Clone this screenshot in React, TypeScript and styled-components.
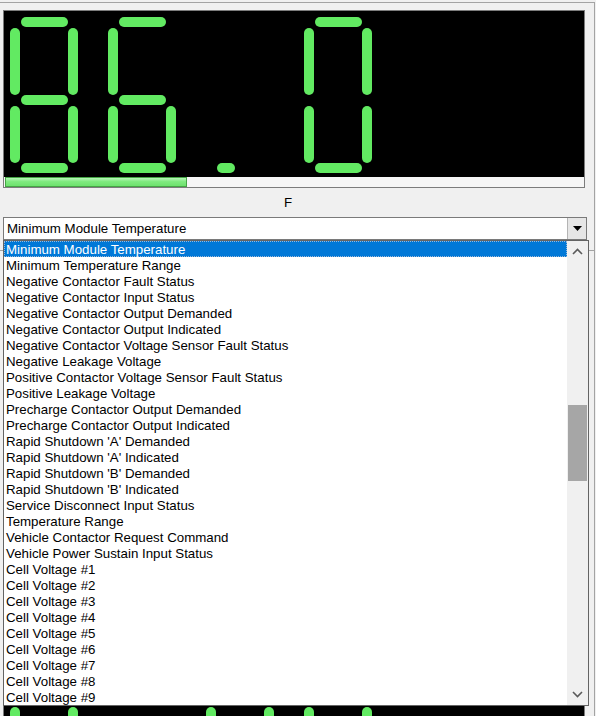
import React from "react";
import styled, { createGlobalStyle } from "styled-components";

const GlobalStyle = createGlobalStyle`
  html, body {
    margin: 0;
    padding: 0;
    background: #f0f0f0;
    overflow: hidden;
  }
  body {
    font-family: "Liberation Sans", Arial, sans-serif;
    font-size: 13.3px;
    color: #000;
  }
`;

const Screen = styled.div`
  position: relative;
  width: 596px;
  height: 716px;
  overflow: hidden;
  padding-top: 2px;
  box-sizing: border-box;
`;

const GaugePanel = styled.div<{ $height: number }>`
  width: 595px;
  height: ${(p) => p.$height}px;
  box-sizing: border-box;
  border-top: 1px solid #a3a3a3;
  border-right: 1px solid #a3a3a3;
  padding: 7px 0 0 3px;
  display: flex;
  flex-direction: column;
`;

const DisplayFrame = styled.div`
  width: 580px;
  border: 1px solid #7c7c7c;
  display: flex;
  flex-direction: column;
`;

const Track = styled.div`
  height: 10px;
  background: #f6f6f6;
  padding: 0 0 0 1px;
  box-sizing: border-box;
`;

const Bar = styled.div`
  height: 10px;
  box-sizing: border-box;
  border: 1px solid #45a545;
  background: linear-gradient(#b8f6b8, #7fea7f 45%, #6ee26e);
`;

const UnitLabel = styled.div`
  width: 570px;
  height: 29px;
  line-height: 29px;
  text-align: center;
`;

const Combo = styled.div`
  width: 584px;
  height: 23px;
  box-sizing: border-box;
  border: 1px solid #7a7a7a;
  background: #fff;
  display: flex;
  align-items: center;
  padding-left: 3px;
`;

const ComboText = styled.span`
  flex: 1;
  line-height: 21px;
`;

const ComboButton = styled.div`
  width: 19px;
  height: 21px;
  box-sizing: border-box;
  border-left: 1px solid #b4b4b4;
  background: #e6e6e6;
  display: flex;
  align-items: center;
  justify-content: center;
`;

const LowerPanel = styled.div`
  width: 595px;
  box-sizing: border-box;
  border-top: 1px solid #a3a3a3;
  border-right: 1px solid #a3a3a3;
  padding: 438px 0 0 3px;
`;

const DropList = styled.div`
  position: absolute;
  top: 240px;
  left: 3px;
  width: 586px;
  height: 466px;
  box-sizing: border-box;
  border: 1px solid #646464;
  background: #fff;
  display: flex;
`;

const Items = styled.div`
  flex: 1;
  overflow: hidden;
`;

const Item = styled.div<{ $selected?: boolean }>`
  height: 16px;
  line-height: 17px;
  padding-left: 2px;
  white-space: nowrap;
  box-sizing: border-box;
  color: ${(p) => (p.$selected ? "#fff" : "#000")};
  background: ${(p) => (p.$selected ? "#0078d7" : "transparent")};
  outline: ${(p) => (p.$selected ? "1px dotted #9ab8d8" : "none")};
  outline-offset: -1px;
`;

const ScrollBar = styled.div`
  width: 21px;
  background: #f0f0f0;
  display: flex;
  flex-direction: column;
  align-items: center;
`;

const ScrollArrow = styled.div`
  height: 21px;
  width: 100%;
  display: flex;
  align-items: center;
  justify-content: center;
`;

const ScrollSpace = styled.div<{ $height: number }>`
  height: ${(p) => p.$height}px;
`;

const Thumb = styled.div`
  width: 19px;
  height: 76px;
  background: #a6a6a6;
`;

// segment boxes relative to a digit cell
const SEG = {
  a: { x: 11, y: 6, w: 47, h: 10 },
  b: { x: 58, y: 17, w: 10, h: 67 },
  c: { x: 58, y: 95, w: 10, h: 57 },
  d: { x: 11, y: 152, w: 47, h: 10 },
  e: { x: 0, y: 95, w: 10, h: 57 },
  f: { x: 0, y: 17, w: 10, h: 67 },
  g: { x: 11, y: 84, w: 47, h: 10 },
  p: { x: 11, y: 152, w: 18, h: 10 },
};

const GLYPHS: Record<string, string> = {
  "0": "abcdef",
  "1": "bc",
  "2": "abdeg",
  "3": "abcdg",
  "4": "bcfg",
  "5": "acdfg",
  "6": "acdefg",
  "7": "abc",
  "8": "abcdefg",
  "9": "abcdfg",
  ".": "p",
  " ": "",
};

const SevenSeg = ({ cells }: { cells: string[] }) => (
  <svg width="580" height="166" style={{ display: "block", background: "#000" }}>
    {cells.map((ch, i) =>
      GLYPHS[ch].split("").map((s) => {
        const r = SEG[s as keyof typeof SEG];
        return (
          <rect
            key={`${i}${s}`}
            x={6 + i * 98 + r.x}
            y={r.y}
            width={r.w}
            height={r.h}
            rx={5}
            fill="#62ea62"
          />
        );
      })
    )}
  </svg>
);

const Chevron = ({ up }: { up?: boolean }) => (
  <svg width="11" height="7" viewBox="0 0 11 7">
    <polyline
      points={up ? "1,6 5.5,1.5 10,6" : "1,1 5.5,5.5 10,1"}
      fill="none"
      stroke="#5a5a5a"
      strokeWidth="1.6"
    />
  </svg>
);

const items = [
  "Minimum Module Temperature",
  "Minimum Temperature Range",
  "Negative Contactor Fault Status",
  "Negative Contactor Input Status",
  "Negative Contactor Output Demanded",
  "Negative Contactor Output Indicated",
  "Negative Contactor Voltage Sensor Fault Status",
  "Negative Leakage Voltage",
  "Positive Contactor Voltage Sensor Fault Status",
  "Positive Leakage Voltage",
  "Precharge Contactor Output Demanded",
  "Precharge Contactor Output Indicated",
  "Rapid Shutdown 'A' Demanded",
  "Rapid Shutdown 'A' Indicated",
  "Rapid Shutdown 'B' Demanded",
  "Rapid Shutdown 'B' Indicated",
  "Service Disconnect Input Status",
  "Temperature Range",
  "Vehicle Contactor Request Command",
  "Vehicle Power Sustain Input Status",
  "Cell Voltage #1",
  "Cell Voltage #2",
  "Cell Voltage #3",
  "Cell Voltage #4",
  "Cell Voltage #5",
  "Cell Voltage #6",
  "Cell Voltage #7",
  "Cell Voltage #8",
  "Cell Voltage #9",
];

const App = () => (
  <Screen>
    <GlobalStyle />
    <GaugePanel $height={248}>
      <DisplayFrame>
        <SevenSeg cells={["8", "6", ".", "0"]} />
        <Track>
          <Bar style={{ width: 182 }} />
        </Track>
      </DisplayFrame>
      <UnitLabel>F</UnitLabel>
      <Combo>
        <ComboText>Minimum Module Temperature</ComboText>
        <ComboButton>
          <svg width="9" height="5" viewBox="0 0 9 5">
            <polygon points="0,0 9,0 4.5,5" fill="#000" />
          </svg>
        </ComboButton>
      </Combo>
    </GaugePanel>
    <LowerPanel>
      <DisplayFrame>
        <SevenSeg cells={["0", " ", "0", "0"]} />
      </DisplayFrame>
    </LowerPanel>

    <DropList>
      <Items>
        {items.map((t, i) => (
          <Item key={t} $selected={i === 0}>
            {t}
          </Item>
        ))}
      </Items>
      <ScrollBar>
        <ScrollArrow>
          <Chevron up />
        </ScrollArrow>
        <ScrollSpace $height={143} />
        <Thumb />
        <ScrollSpace $height={203} />
        <ScrollArrow>
          <Chevron />
        </ScrollArrow>
      </ScrollBar>
    </DropList>
  </Screen>
);

export default App;
